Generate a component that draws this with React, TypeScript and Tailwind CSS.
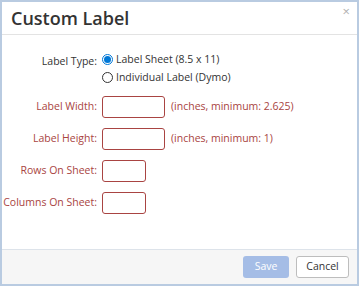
export default function App() {
  const rows = [
    { label: 'Label Width:', width: 'w-[63px]', hint: '(inches, minimum: 2.625)' },
    { label: 'Label Height:', width: 'w-[63px]', hint: '(inches, minimum: 1)' },
    { label: 'Rows On Sheet:', width: 'w-[44px]', hint: '' },
    { label: 'Columns On Sheet:', width: 'w-[44px]', hint: '' },
  ];

  return (
    <div className="h-[286px] w-[359px] bg-white font-['Open_Sans',sans-serif]">
      <div className="flex h-full flex-col border-2 border-[#b9cbe1]">
        {/* Header */}
        <div className="flex h-[33px] items-center justify-between border-b border-[#e3e3e3] pl-[9px] pr-[7px]">
          <h1 className="text-[18px] font-semibold leading-none text-[#333]">Custom Label</h1>
          <span className="-mt-[14px] text-[13px] leading-none text-[#b0b0b0]">×</span>
        </div>

        {/* Body */}
        <div className="flex flex-1 flex-col pt-[17px] text-[10.5px]">
          <div className="flex">
            <div className="w-[95px] whitespace-nowrap pt-[2px] text-right text-[#333]">Label Type:</div>
            <div className="ml-[5px] flex flex-col gap-[2px] text-[#333]">
              <label className="flex items-center gap-[3px] whitespace-nowrap">
                <span className="flex h-[11px] w-[11px] items-center justify-center rounded-full border border-[#0078d7]">
                  <span className="h-[7px] w-[7px] rounded-full bg-[#0078d7]" />
                </span>
                Label Sheet (8.5 x 11)
              </label>
              <label className="flex items-center gap-[3px] whitespace-nowrap">
                <span className="h-[11px] w-[11px] rounded-full border border-[#333]" />
                Individual Label (Dymo)
              </label>
            </div>
          </div>

          <div className="mt-[10px] flex flex-col gap-[10px]">
            {rows.map((row) => (
              <div key={row.label} className="flex items-center">
                <div className="w-[95px] whitespace-nowrap text-right text-[#a94442]">{row.label}</div>
                <div className={`ml-[5px] h-[22px] ${row.width} rounded-[3px] border border-[#a94442]`} />
                {row.hint && <span className="ml-[6px] whitespace-nowrap text-[#a94442]">{row.hint}</span>}
              </div>
            ))}
          </div>
        </div>

        {/* Footer */}
        <div className="flex h-[35px] items-center justify-end gap-[7px] border-t border-[#dde3ea] bg-[#f6f6f6] pr-[8px]">
          <button className="h-[22px] w-[46px] rounded-[3px] bg-[#a5bde6] text-[10.5px] text-white">Save</button>
          <button className="h-[22px] w-[53px] rounded-[3px] border border-[#bdbdbd] bg-white text-[10.5px] text-[#333]">
            Cancel
          </button>
        </div>
      </div>
    </div>
  );
}
